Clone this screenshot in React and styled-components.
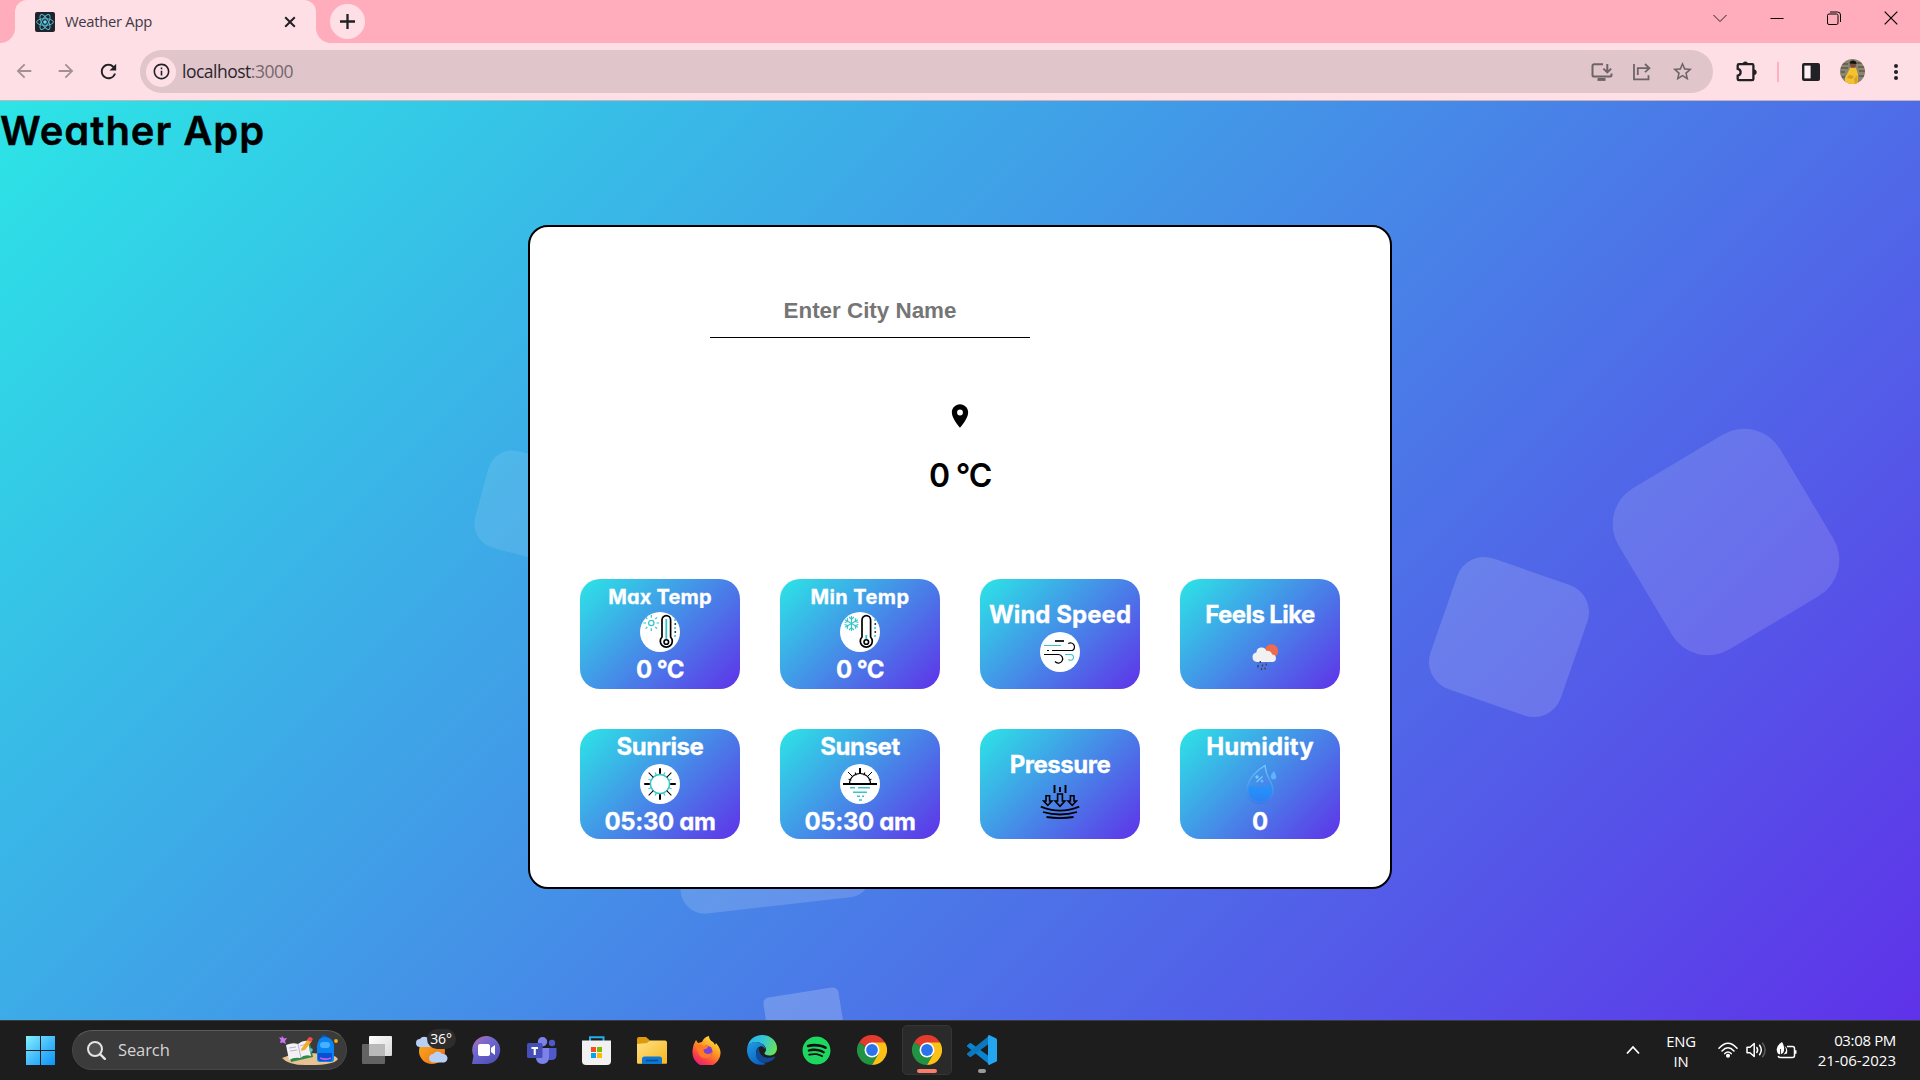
import React from "react";
import styled, { createGlobalStyle } from "styled-components";
import { MdLocationOn, MdStarBorder, MdArrowBack, MdArrowForward, MdRefresh, MdInfoOutline } from "react-icons/md";
import { FaSpotify } from "react-icons/fa";

const UI = `"Open Sans", "Noto Sans", sans-serif`;
const GEO = `Inter, "Open Sans", sans-serif`;
const BRAND = "linear-gradient(135deg, #2ce5e6 0%, #5f32e9 100%)";

const GlobalStyle = createGlobalStyle`
  * { box-sizing: border-box; }
  html, body { margin: 0; padding: 0; background: #1d1d1d; }
  svg { display: block; flex: none; }
`;

const Desktop = styled.div`
  width: 1920px;
  height: 1080px;
  display: flex;
  flex-direction: column;
  overflow: hidden;
  font-family: ${UI};
`;

/* ---------- browser chrome ---------- */

const TabStrip = styled.div`
  height: 43px;
  flex: none;
  display: flex;
  align-items: flex-start;
  background: #ffadbc;
`;

const TabFoot = styled.div`
  width: 15px;
  height: 43px;
  background: radial-gradient(circle at ${(p) => (p.$side === "left" ? "0 0" : "100% 0")}, transparent 14.5px, #ffdfe6 15.5px) no-repeat 0 28px / 15px 15px;
`;

const Tab = styled.div`
  width: 301px;
  height: 43px;
  display: flex;
  align-items: center;
  padding: 0 20px;
  background: #ffdfe6;
  border-radius: 12px 12px 0 0;
`;

const TabTitle = styled.span`
  flex: 1;
  margin-left: 10px;
  font-size: 14.8px;
  line-height: 20px;
  letter-spacing: -0.3px;
  color: #3c3a44;
  padding-bottom: 2px;
`;

const NewTab = styled.div`
  width: 35px;
  height: 35px;
  margin: 4px 0 0 -1px;
  border-radius: 50%;
  background: #ffdfe6;
  display: grid;
  place-items: center;
`;

const WindowControls = styled.div`
  margin-left: auto;
  display: flex;
  gap: 43px;
  padding: 11px 22px 0 0;
`;

const Toolbar = styled.div`
  height: 58px;
  flex: none;
  display: flex;
  align-items: center;
  background: #ffdfe6;
  border-bottom: 1px solid #c4b4ba;
  padding: 0 12px 0 13px;
`;

const NavButtons = styled.div`
  display: flex;
  width: 127px;
  gap: 20px;
  color: #202124;
`;

const AddressBar = styled.div`
  width: 1573px;
  height: 43px;
  border-radius: 22px;
  background: #e0c5ca;
  display: flex;
  align-items: center;
  padding: 0 19px 0 6px;
`;

const SiteInfo = styled.div`
  width: 30px;
  height: 30px;
  border-radius: 50%;
  background: #ffdfe6;
  display: grid;
  place-items: center;
  color: #202124;
`;

const Url = styled.span`
  flex: 1;
  margin-left: 6px;
  padding-bottom: 1px;
  font-size: 17.5px;
  line-height: 24px;
  letter-spacing: -0.5px;
  color: #2a262d;
  span { color: #75686e; }
`;

const AddressActions = styled.div`
  display: flex;
  align-items: center;
  gap: 20px;
  color: #6d6468;
`;

const ToolbarActions = styled.div`
  margin-left: 23px;
  display: flex;
  flex: 1;
  align-items: center;
  color: #202124;
`;

const Divider = styled.div`
  width: 2px;
  height: 20px;
  margin: 0 23px 0 20px;
  background: #ffb3c1;
`;

const Avatar = styled.div`
  margin: 0 23px 0 20px;
  width: 25px;
  height: 25px;
  border-radius: 50%;
  overflow: hidden;
`;

/* ---------- page ---------- */

const Page = styled.main`
  position: relative;
  height: 919px;
  flex: none;
  overflow: hidden;
  background: ${BRAND};
  font-family: ${GEO};
  font-feature-settings: "cv11";
`;

const Square = styled.div`
  position: absolute;
  left: ${(p) => p.$x - p.$size / 2}px;
  top: ${(p) => p.$y - p.$size / 2}px;
  width: ${(p) => p.$size}px;
  height: ${(p) => p.$size}px;
  border-radius: ${(p) => p.$radius}px;
  transform: rotate(${(p) => p.$turn}deg);
  background: rgba(255, 255, 255, ${(p) => p.$alpha});
`;

const PageTitle = styled.h1`
  position: relative;
  margin: 0;
  height: 124px;
  padding-top: 8px;
  font-size: 40px;
  line-height: 44px;
  font-weight: 600;
  letter-spacing: 0.95px;
  -webkit-text-stroke: 0.4px #000;
  color: #000;
`;

const Card = styled.section`
  position: relative;
  width: 864px;
  height: 664px;
  margin: 0 auto;
  padding: 57px 50px 0;
  background: #fff;
  border: 2px solid #000;
  border-radius: 20px;
  display: flex;
  flex-direction: column;
  align-items: center;
`;

const CityInput = styled.input`
  width: 320px;
  height: 54px;
  align-self: flex-start;
  margin-left: 130px;
  padding: 0;
  border: 0;
  border-bottom: 1px solid #000;
  outline: 0;
  background: transparent;
  text-align: center;
  font: bold 22.4px "Liberation Sans", Arial, sans-serif;
  &::placeholder { color: #757575; opacity: 1; }
`;

const Location = styled.div`
  height: 28px;
  margin-top: 64px;
`;

const Temperature = styled.div`
  margin-top: 22px;
  height: 127px;
  font-size: 32px;
  line-height: 48px;
  font-weight: 600;
  letter-spacing: -1.2px;
  color: #000;
`;

const Tiles = styled.div`
  display: grid;
  grid-template-columns: repeat(4, 160px);
  grid-auto-rows: 110px;
  gap: 40px;
`;

const Tile = styled.div`
  display: flex;
  flex-direction: column;
  align-items: center;
  justify-content: center;
  padding-top: ${(p) => (p.$small ? 2 : 0)}px;
  border-radius: 20px;
  background: ${BRAND};
  color: #fff;
`;

const TileText = styled.div`
  flex: none;
  font-size: ${(p) => (p.$small ? 20 : 24)}px;
  line-height: 1.5;
  font-weight: 700;
  white-space: nowrap;
  letter-spacing: ${(p) => p.$track || 0}px;
  -webkit-text-stroke: 0.3px #fff;
`;

const TileLabel = styled(TileText)`
  height: ${(p) => (p.$small ? 30 : 36)}px;
  line-height: ${(p) => (p.$small ? 30 : 38)}px;
`;

/* ---------- taskbar ---------- */

const Taskbar = styled.footer`
  height: 60px;
  flex: none;
  display: flex;
  align-items: center;
  background: #1d1d1d;
  border-top: 1px solid #3b3b3e;
  padding: 0 24px 1px 13px;
  color: #fff;
`;

const Slot = styled.div`
  width: 55px;
  height: 58px;
  display: grid;
  place-items: center;
`;

const ActiveApp = styled.div`
  width: 50px;
  height: 50px;
  border-radius: 5px;
  background: #2a2a2a;
  border: 1px solid #353535;
  display: grid;
  place-items: center;
`;

const Stack = styled.div`
  position: relative;
  display: grid;
  place-items: center;
`;

const Indicator = styled.span`
  position: absolute;
  top: 34px;
  width: ${(p) => p.$width}px;
  height: 4px;
  border-radius: 2px;
  background: ${(p) => p.$color};
`;

const SearchBox = styled.div`
  width: 275px;
  height: 40px;
  margin: 0 2px 0 4px;
  padding: 0 7px 0 14px;
  display: flex;
  align-items: center;
  border-radius: 20px;
  background: #3b3b3b;
  border: 1px solid #474747;
  border-top-color: #5c5c5c;
  span {
    flex: 1;
    margin-left: 12px;
    font-size: 16.5px;
    line-height: 22px;
    letter-spacing: -0.1px;
    color: #d4d4d4;
  }
`;

const WeatherBadge = styled.span`
  position: absolute;
  left: 11px;
  top: -7px;
  width: 29px;
  height: 20px;
  border-radius: 10px;
  background: #2d2d2d;
  font-size: 14px;
  line-height: 20px;
  text-align: center;
  letter-spacing: -0.2px;
`;

const Tray = styled.div`
  margin-left: auto;
  display: flex;
  align-items: center;
`;

const Language = styled.div`
  width: 36px;
  margin: 1px 19px 0 23px;
  text-align: center;
  font-size: 14.8px;
  line-height: 20px;
  letter-spacing: -0.2px;
`;

const Clock = styled.div`
  width: 99px;
  text-align: right;
  font-size: 15px;
  line-height: 20px;
  white-space: nowrap;
  letter-spacing: ${(p) => p.$track || 0}px;
`;

const ClockTime = styled.div`
  letter-spacing: -0.35px;
`;

const TrayIcons = styled.div`
  display: flex;
  align-items: center;
  gap: 8px;
`;

/* ---------- drawings ---------- */

const TEAL = "#33c5c9";

const ReactIcon = () => (
  <svg width="20" height="20" viewBox="0 0 20 20">
    <rect width="20" height="20" rx="2" fill="#20232a" />
    <g fill="none" stroke="#53b9d1" strokeWidth="1">
      {[0, 60, 120].map((a) => (
        <ellipse key={a} cx="10" cy="10" rx="8.4" ry="3.3" transform={`rotate(${a} 10 10)`} />
      ))}
    </g>
    <circle cx="10" cy="10" r="1.8" fill="#61dafb" />
  </svg>
);

const ShareIcon = () => (
  <svg width="18" height="18" viewBox="0 0 18 18" fill="none" stroke="currentColor" strokeWidth="1.8">
    <path d="M1 1v15.4h14.5v-4.2M4.8 12V5.2h10.5M12 1l4.4 4.2L12 9.2" />
  </svg>
);

const InstallIcon = () => (
  <svg width="22" height="18" viewBox="0 0 22 18" fill="none" stroke="currentColor" strokeWidth="2">
    <path d="M12 1.2H3.2Q1.5 1.2 1.5 2.7V12q0 1.6 1.7 1.6h15.6q1.7 0 1.7-1.6v-1.5M16.3 1v8M12.4 5.6l3.9 3.8 3.9-3.8" />
    <path d="M6.5 16.4h8" strokeWidth="3" />
  </svg>
);

const PuzzleIcon = () => (
  <svg width="21" height="21" viewBox="0 0 21 21">
    <path d="M1.7 4.4q0-1.2 1.2-1.2h13.3q1.2 0 1.2 1.2v13.6q0 1.2-1.2 1.2H2.9q-1.2 0-1.2-1.2v-3.3q2.9-.6 2.9-3.4t-2.9-3.4z" fill="none" stroke="currentColor" strokeWidth="2.3" />
    <path d="M6.7 3.2a2.6 2.6 0 0 1 5.2 0zM18 8.6a2.6 2.6 0 0 1 0 5.3z" fill="currentColor" />
  </svg>
);

const PanelIcon = () => (
  <svg width="18" height="18" viewBox="0 0 18 18">
    <rect width="18" height="18" rx="2" fill="#202124" />
    <path d="M2.4 2.6h6.2v12.800H2.400z" fill="#fff0f3" />
  </svg>
);

const AvatarArt = () => (
  <svg width="25" height="25" viewBox="0 0 25 25">
    <rect width="25" height="25" fill="#8a8470" />
    <path d="M2 5h6M1 9h7M1 13h4M17 4h7M18 8h6M19 12h6M19 17h5M2 18h3" stroke="#5f5b4c" strokeWidth="1.5" />
    <path d="M5 25l0-6 2-4 3-6 6 0 2 6 0 10z" fill="#f2c22f" />
    <path d="M9 16l5 1-2 3-5-1z" fill="#d99b22" />
    <circle cx="13" cy="5.5" r="3.1" fill="#7a4d38" />
    <path d="M9.500 4.500Q10 1 13.500 1.500T16.500 5z" fill="#17130f" />
    <path d="M14 20l1 5h3l-1-9z" fill="#d9a327" />
  </svg>
);

const Disc = ({ children }) => (
  <svg width="40" height="40" viewBox="0 0 40 40" fill="none">
    <circle cx="20" cy="20" r="20" fill="#fff" />
    {children}
  </svg>
);

const Thermometer = ({ level }) => (
  <>
    <path d="M22 25V8a4.300 4.300 0 0 1 8.600 0v17a6 6 0 1 1-8.600 0z" stroke="#000" strokeWidth="1.7" />
    <path d={`M26.300 ${level}V27`} stroke={TEAL} strokeWidth="1.8" />
    <circle cx="26.3" cy="30" r="2.3" stroke="#000" strokeWidth="1.6" />
    <path d="M34 8h2M34 16h2M34 24h2" stroke={TEAL} strokeWidth="1.7" />
    <path d="M34.500 12h1.600M34.500 20h1.600" stroke="#000" strokeWidth="1.6" />
  </>
);

const MaxTempIcon = () => (
  <Disc>
    <circle cx="11.3" cy="11" r="2.7" stroke={TEAL} strokeWidth="1.2" />
    <path d="M11.300 3v2.800M11.300 16.200V19M3.300 11h2.800M16.500 11h2.800M5.600 5.300l1.700 1.700M15.300 15l1.700 1.700M5.600 16.700L7.300 15M15.300 7L17 5.300" stroke={TEAL} strokeWidth="1.2" />
    <Thermometer level={7} />
  </Disc>
);

const MinTempIcon = () => (
  <Disc>
    {[0, 60, 120, 180, 240, 300].map((a) => (
      <path key={a} d="M11.500 11.500V4M9 5l2.500 2.400L14 5" stroke={TEAL} strokeWidth="1.1" transform={`rotate(${a} 11.5 11.5)`} />
    ))}
    <Thermometer level={23} />
  </Disc>
);

const WindIcon = () => (
  <Disc>
    <path d="M4 13.500h17M25 22.500h6a2.900 2.900 0 1 1-2.500 4.800" stroke={TEAL} strokeWidth="1.1" />
    <path d="M15 9h9" stroke="#000" strokeWidth="1.7" />
    <path d="M7 18.500h2M12 18.500h20.500a4 4 0 1 0-4.200-7M4 22.500h14.500a4.300 4.300 0 1 1-3.500 7" stroke="#000" strokeWidth="1.2" />
  </Disc>
);

const SunriseIcon = () => (
  <Disc>
    <circle cx="20" cy="20" r="9.6" stroke={TEAL} strokeWidth="1.5" />
    {[0, 90, 180, 270].map((a) => (
      <path key={a} d="M20 4.200v5.600" stroke="#000" strokeWidth="2" transform={`rotate(${a} 20 20)`} />
    ))}
    {[45, 135, 225, 315].map((a) => (
      <path key={a} d="M20 4v6.500" stroke="#000" strokeWidth="1" transform={`rotate(${a} 20 20)`} />
    ))}
    {[22.5, 67.5, 112.5, 157.5, 202.5, 247.5, 292.5, 337.5].map((a) => (
      <path key={a} d="M20 7.500v3" stroke={TEAL} strokeWidth="1" transform={`rotate(${a} 20 20)`} />
    ))}
  </Disc>
);

const SunsetIcon = () => (
  <Disc>
    <path d="M9.500 19.500a10.500 10 0 0 1 21 0" stroke="#000" strokeWidth="1.2" />
    {[-67, -23, 23, 67].map((a) => (
      <path key={a} d="M20 7.500v3" stroke="#000" strokeWidth="1" transform={`rotate(${a} 20 20)`} />
    ))}
    <path d="M20 4v6" stroke="#000" strokeWidth="2" />
    <path d="M8 8l4.500 4.500M32 8l-4.500 4.500" stroke="#000" strokeWidth="1" />
    <path d="M3 20h34" stroke="#000" strokeWidth="1.8" />
    <path d="M10 23.800h5M18 23.800h12M13 28.200h14M17 32.200h3M22 32.200h2M19 36h3" stroke={TEAL} strokeWidth="1.5" />
  </Disc>
);

const FeelsLikeIcon = () => (
  <svg width="40" height="40" viewBox="0 0 40 40">
    <circle cx="31.5" cy="19" r="6.7" fill="#ee6c4d" />
    <path d="M17 30a4.800 4.800 0 0 1-.6-9.500 5.200 5.200 0 0 1 10.100-1.500 4.200 4.200 0 0 1 5.500 3.500 3.800 3.800 0 0 1 1 7.500z" fill="#f1f1f1" />
    <path d="M20.300 29v2M18.300 33l-.6 2.500M22.700 32.500l-.5 2M21.800 36l-.5 2M26.500 31.500l-.5 2M25.300 35.500l-.5 2" stroke="#41454c" strokeWidth="1.4" />
  </svg>
);

const PressureIcon = () => (
  <svg width="40" height="40" viewBox="0 0 40 40" fill="none" stroke="#000" strokeWidth="1.6">
    <path d="M14.500 3v8M20 5v5M25.500 3v8" strokeWidth="1.9" />
    <path d="M17.600 12h4.800v7h2.500L20 24.300 15.100 19h2.500z" />
    <path d="M6 13.700h3.600v5.300h2.300l-4.100 4.300L3.700 19H6zM30.400 13.700H34V19h2.300l-4.100 4.300-4.100-4.300h2.300z" />
    <path d="M.8 24.700q19.200 8 38.400 0M3 30q17 5 34 0M6.500 35q13.500 2.200 27 0" strokeWidth="1.8" />
  </svg>
);

const HumidityIcon = () => (
  <svg width="40" height="40" viewBox="0 0 40 40" fill="none">
    <defs>
      <linearGradient id="drop" x1="0" y1="0" x2="0" y2="1">
        <stop offset="0" stopColor="#77c8ff" />
        <stop offset="0.6" stopColor="#3f9bf2" />
        <stop offset="1" stopColor="#3b78e8" />
      </linearGradient>
      <linearGradient id="water" x1="0" y1="0" x2="0" y2="1">
        <stop offset="0" stopColor="#2496fa" />
        <stop offset="1" stopColor="#2c80f4" />
      </linearGradient>
    </defs>
    <path d="M25 1.500C19 5 7 14 7 26.500a13 13 0 0 0 26 0C33 17 26 15 25 1.500z" stroke="url(#drop)" strokeWidth="1.3" />
    <path d="M9 22.500q3-2 5.500-.3 3 1.800 5.500-.2 3 2.800 6 .2 2.500-2.600 4.700.3 1 2 .8 4a11.400 11.400 0 0 1-22.800 0z" fill="url(#water)" />
    <path d="M16.500 18l6-5.500" stroke="#77c8ff" strokeWidth="1.3" />
    <circle cx="17" cy="13" r="1.7" fill="#77c8ff" />
    <circle cx="22" cy="17" r="1.5" fill="#5fb8ff" />
    <path d="M34 7q-4 4.200-3 7 3 3 5.200 0Q36.500 11.500 34 7z" fill="#5bb6fb" />
  </svg>
);

const WindowsLogo = () => (
  <svg width="29" height="29" viewBox="0 0 29 29">
    <defs>
      <linearGradient id="win" x1="0" y1="0" x2="1" y2="1">
        <stop offset="0" stopColor="#84f1fb" />
        <stop offset="0.5" stopColor="#45bdfb" />
        <stop offset="1" stopColor="#0b93f8" />
      </linearGradient>
    </defs>
    <path d="M0 0h14v14H0zM15 0h14v14H15zM0 15h14v14H0zM15 15h14v14H15z" fill="url(#win)" />
  </svg>
);

const SearchIcon = () => (
  <svg width="19" height="19" viewBox="0 0 19 19" fill="none" stroke="#e4e4e4" strokeLinecap="round">
    <circle cx="8" cy="8" r="7" strokeWidth="2" fill="#505050" />
    <path d="M13.300 13.300l4.500 4.500" strokeWidth="2.4" />
  </svg>
);

const StudyArt = () => (
  <svg width="60" height="32" viewBox="0 0 60 32">
    <path d="M3 24Q20 17 42 20q14 0 17 5-4 6-28 6Q10 32 3 24z" fill="#e9c291" />
    <path d="M8 13l4 15 22-5-3-14z" fill="#2f8a4c" />
    <path d="M7 11q7-3 12-1 5-4 10-3l3 15q-6-2-11 2-6-1-11 2z" fill="#f3f0f6" />
    <path d="M19 10l3 14M10 14l7-1M11 17l7-1M21 12l6-2M22 15l6-2" stroke="#b9b3c4" strokeWidth="1" />
    <path d="M23 14l6-9 4 2-7 9-4 1z" fill="#f7a928" />
    <path d="M28 6l2-3q3 0 4 2l-2 3z" fill="#ef4b50" />
    <rect x="42" y="1" width="6" height="5" rx="2.5" fill="#0b56b8" />
    <path d="M38 12Q39 3 46 3t9 8v14q0 3-3 3H41q-3 0-3-3z" fill="#0a84f2" />
    <rect x="41" y="8" width="10" height="6" rx="3" fill="#46b1ff" />
    <path d="M39 19h14v5q0 3-3 3h-8q-3 0-3-3z" fill="#0a4fd0" />
    <path d="M41 24q5 2.500 11 0" stroke="#c45bea" strokeWidth="1.8" fill="none" />
    <path d="M3 2l2 2.500 3-.5-2 3 1 3-3-1.600L1 9l.8-3L0 3.500l2.500.3z" fill="#cf73f3" />
    <circle cx="32" cy="16" r="1.8" fill="#58c4cf" />
    <circle cx="57" cy="7" r="1.9" fill="#fbb113" />
  </svg>
);

const TaskView = () => (
  <svg width="30" height="28" viewBox="0 0 30 28">
    <defs>
      <linearGradient id="tv" x1="0" y1="0" x2="1" y2="1">
        <stop offset="0" stopColor="#fff" />
        <stop offset="1" stopColor="#d8d8d8" />
      </linearGradient>
    </defs>
    <rect y="8" width="23" height="20" rx="1" fill="#636363" />
    <rect x="7" width="23" height="20" rx="1" fill="url(#tv)" />
    <path d="M7 8h16v12H7z" fill="#b9b9b9" />
  </svg>
);

const Cloud = ({ x, y, s = 1 }) => (
  <path transform={`translate(${x} ${y}) scale(${s})`} d="M4 10a4 4 0 0 1 0-8 5 5 0 0 1 8.500 0 4 4 0 0 1 2 8z" fill="#b9d0f5" />
);

const WeatherIcon = () => (
  <svg width="32" height="29" viewBox="0 0 32 29">
    <defs>
      <linearGradient id="sunny" x1="0" y1="0" x2="1" y2="1">
        <stop offset="0" stopColor="#f9b020" />
        <stop offset="1" stopColor="#ef6c13" />
      </linearGradient>
    </defs>
    <circle cx="16" cy="15" r="13" fill="url(#sunny)" />
    <Cloud x={0} y={1} />
    <Cloud x={13} y={16} s={1.05} />
  </svg>
);

const ChatIcon = () => (
  <svg width="29" height="28" viewBox="0 0 29 28">
    <defs>
      <linearGradient id="chat" x1="0" y1="0" x2="0.7" y2="1">
        <stop offset="0" stopColor="#b96fae" />
        <stop offset="0.45" stopColor="#6e67cf" />
        <stop offset="1" stopColor="#5050b8" />
      </linearGradient>
    </defs>
    <path d="M0 28l1.500-8A14 14 0 1 1 15 28z" fill="url(#chat)" />
    <rect x="6" y="8" width="12" height="12" rx="2" fill="#fff" />
    <path d="M19 12l4-3v10l-4-3z" fill="#fff" />
  </svg>
);

const TeamsIcon = () => (
  <svg width="30" height="27" viewBox="0 0 30 27">
    <circle cx="25" cy="6" r="3.2" fill="#5059c9" />
    <path d="M21 11h8.500v7q0 5-5 5H21z" fill="#5059c9" />
    <circle cx="15.5" cy="4.7" r="4.7" fill="#7b83eb" />
    <path d="M9 11h13v9q0 7-6.500 7T9 20z" fill="#7b83eb" />
    <rect y="6" width="15.5" height="15" rx="1.5" fill="#464eb8" />
    <path d="M4.500 10h6.500v2H8.800v6H6.700v-6H4.500z" fill="#fff" />
  </svg>
);

const StoreIcon = () => (
  <svg width="29" height="29" viewBox="0 0 29 29">
    <path d="M8 6V1.200h13.500V6" fill="none" stroke="#1fb0f0" strokeWidth="2" />
    <path d="M0 4.500h29V25q0 4-4 4H4q-4 0-4-4z" fill="#f1f1f1" />
    <path d="M9 11h5v5H9z" fill="#f25022" />
    <path d="M15 11h5v5h-5z" fill="#7fba00" />
    <path d="M9 17h5v5H9z" fill="#00a4ef" />
    <path d="M15 17h5v5h-5z" fill="#ffb900" />
  </svg>
);

const FolderIcon = () => (
  <svg width="30" height="27" viewBox="0 0 30 27">
    <defs>
      <linearGradient id="folder" x1="0" y1="0" x2="1" y2="1">
        <stop offset="0" stopColor="#ffe083" />
        <stop offset="1" stopColor="#f7b71f" />
      </linearGradient>
    </defs>
    <path d="M0 2q0-2 2-2h7l4 3.500L10 8H0z" fill="#dd9a0c" />
    <path d="M0 7l10-1 3-2.500h15q2 0 2 2V26q0 .8-1 .8H1q-1 0-1-1z" fill="url(#folder)" />
    <path d="M5 27v-5q0-2.500 2.500-2.500h15Q25 19.500 25 22v5z" fill="#0e78d0" />
    <path d="M9 23.500h12" stroke="#0a4a94" strokeWidth="1.5" />
  </svg>
);

const FirefoxIcon = () => (
  <svg width="29" height="29" viewBox="0 0 29 29">
    <defs>
      <linearGradient id="fox" x1="0.8" y1="0" x2="0.2" y2="1">
        <stop offset="0" stopColor="#fff04a" />
        <stop offset="0.4" stopColor="#ff9a1f" />
        <stop offset="0.75" stopColor="#fb3f48" />
        <stop offset="1" stopColor="#e31587" />
      </linearGradient>
    </defs>
    <path d="M4 4l2 3 4-1q2-5 7-6 0 4 4 6 1 1 2 3l1-2q5 6 4.500 10A14 14 0 0 1 .5 16Q0 10 4 4z" fill="url(#fox)" />
    <circle cx="14.5" cy="15.5" r="6" fill="#7a43d6" />
    <path d="M3.500 9q5-2 8 1h5q-1 3-5 3.500 0 4 4 4.500 3 .3 4.500-2 0 5-5 6-7 1-8.500-5z" fill="#ff7a26" />
  </svg>
);

const EdgeIcon = () => (
  <svg width="30" height="30" viewBox="0 0 30 30">
    <defs>
      <linearGradient id="edgeTop" x1="0" y1="0.3" x2="1" y2="0.6">
        <stop offset="0" stopColor="#28b5ee" />
        <stop offset="0.5" stopColor="#35c6d6" />
        <stop offset="1" stopColor="#6be353" />
      </linearGradient>
      <linearGradient id="edgeLow" x1="0" y1="0" x2="0.6" y2="1">
        <stop offset="0" stopColor="#1f9de4" />
        <stop offset="1" stopColor="#0b62c4" />
      </linearGradient>
    </defs>
    <path d="M0.300 13.500C1 5 7.500 0 15 0c9 0 15 6.500 15 13 0 5-3.500 7.500-7.500 7.500-3.500 0-5.500-1.500-5-2.600 1-1.300 1.500-2 1.500-3.500C19 10 13 7 8.500 7S1 10 .3 13.500z" fill="url(#edgeTop)" />
    <path d="M0 15C0 9.500 4 7 8.500 7c5 0 10.300 3.500 9.500 7-1-2-3-3-5-2.500-3.500 1-5 5.500-3 10 1.500 4 5.500 6.500 9 7.500C8 32.500 0 24.500 0 15z" fill="url(#edgeLow)" />
    <path d="M12 12.500c-4 4-4 9.500-.5 13 3 3 8.500 3 13 .3 2-1.300 3.500-3 3.500-3.800 0-.5-.6-.6-1.200-.3-5.500 2.500-14 .8-14.800-6.700z" fill="#104a94" />
  </svg>
);

const SpotifyMark = styled.div`
  width: 29px;
  height: 29px;
  border-radius: 50%;
  background: #101010;
  color: #1ed760;
`;

const ChromeIcon = () => (
  <svg width="30" height="30" viewBox="0 0 30 30">
    <path d="M15 15L2 7.500A15 15 0 0 1 28 7.500z" fill="#e33b2e" />
    <path d="M15 15l6.500 3.700L15 30A15 15 0 0 1 2 7.500z" fill="#229342" />
    <path d="M15 7.500h13A15 15 0 0 1 15 30l6.500-11.300z" fill="#fbc116" />
    <circle cx="15" cy="15" r="7.5" fill="#fff" />
    <circle cx="15" cy="15" r="5.9" fill="#2a73ea" />
  </svg>
);

const CodeIcon = () => (
  <svg width="30" height="30" viewBox="0 0 30 30">
    <path d="M0 10.500l2.500-2.300q.8-.6 1.600 0L23 22v8L.3 11.800q-.8-.7-.3-1.300z" fill="#0a84cf" />
    <path d="M0 19.500l2.500 2.300q.8.6 1.600 0L23 8V0L.3 18.200q-.8.700-.3 1.300z" fill="#0d78bd" />
    <path d="M22 30q-1-.4-1-1.500V1.500Q21 .4 22 0l7 3.200q1 .5 1 1.500v20.600q0 1-1 1.500z" fill="#23a6ef" />
  </svg>
);

const WifiIcon = () => (
  <svg width="20" height="16" viewBox="0 0 20 16" fill="none" stroke="#fff" strokeWidth="1.5" strokeLinecap="round">
    <path d="M1 6.200Q10-3.800 19 6.200M4 9q6-6.500 12 0M6.800 11.600q3.200-3.300 6.400 0" />
    <circle cx="10" cy="13.7" r="1.3" fill="#fff" />
  </svg>
);

const SpeakerIcon = () => (
  <svg width="22" height="18" viewBox="0 0 22 18" fill="none" stroke="#fff" strokeWidth="1.5" strokeLinecap="round" strokeLinejoin="round">
    <path d="M1 6.200h3l4.200-3.700v13L4 11.800H1zM10.800 6.500q1.700 2.500 0 5M13.600 4.300q3.400 4.700 0 9.400" />
    <path d="M16.600 2.200q5 6.800 0 13.600" stroke="#5c5c5c" />
  </svg>
);

const BatteryIcon = () => (
  <svg width="21" height="17" viewBox="0 0 21 17" fill="none">
    <path d="M11 4.500h5.500q2 0 2 2v7q0 2-2 2h-12q-2 0-2.300-1.500" stroke="#fff" strokeWidth="1.5" />
    <path d="M19 8.200h1.500v3.600H19z" fill="#fff" />
    <path d="M6 0q-5 3-5.300 7Q.6 12 4 12.500 9 11.500 8 5 7.500 2 6 0zM8.500 4q3.500 5-1 8.500l3.500-1Q12 6 8.500 4z" fill="#fff" />
    <path d="M4.500 7v7" stroke="#1d1d1d" strokeWidth="0.8" />
  </svg>
);

const TILES = [
  { label: "Max Temp", small: true, track: 0.2, icon: MaxTempIcon, value: "0 °C", valueTrack: -0.5 },
  { label: "Min Temp", small: true, track: 0.4, icon: MinTempIcon, value: "0 °C", valueTrack: -0.5 },
  { label: "Wind Speed", track: 0.05, icon: WindIcon },
  { label: "Feels Like", track: -0.6, icon: FeelsLikeIcon },
  { label: "Sunrise", track: -0.4, icon: SunriseIcon, value: "05:30 am", valueTrack: -0.35 },
  { label: "Sunset", track: -0.4, icon: SunsetIcon, value: "05:30 am", valueTrack: -0.35 },
  { label: "Pressure", track: -0.45, icon: PressureIcon },
  { label: "Humidity", track: 0.1, icon: HumidityIcon, value: "0" },
];

const SQUARES = [
  { x: 1726.3, y: 441, size: 188, radius: 42, turn: -30.8, alpha: 0.13 },
  { x: 1509.2, y: 535.8, size: 138, radius: 28.6, turn: 19.2, alpha: 0.15 },
  { x: 530.4, y: 405.3, size: 100, radius: 25, turn: 15, alpha: 0.1 },
  { x: 767.5, y: 708.5, size: 192, radius: 24, turn: -6.5, alpha: 0.15 },
  { x: 806, y: 929, size: 76, radius: 6, turn: -9, alpha: 0.2 },
];

export default function App() {
  return (
    <Desktop>
      <GlobalStyle />
      <TabStrip>
        <TabFoot $side="left" />
        <Tab>
          <ReactIcon />
          <TabTitle>Weather App</TabTitle>
          <svg width="12" height="12" viewBox="0 0 12 12" stroke="#202124" strokeWidth="2">
            <path d="M1.200 1.200l9.600 9.600M10.800 1.200l-9.600 9.600" />
          </svg>
        </Tab>
        <TabFoot $side="right" />
        <NewTab>
          <svg width="15" height="15" viewBox="0 0 15 15" stroke="#202124" strokeWidth="2.3">
            <path d="M7.500 0v15M0 7.500h15" />
          </svg>
        </NewTab>
        <WindowControls>
          <svg width="14" height="14" viewBox="0 0 14 14" fill="none" stroke="#222">
            <path d="M.5 4l6.500 6.500L13.500 4" />
          </svg>
          <svg width="14" height="14" viewBox="0 0 14 14" fill="none" stroke="#000">
            <path d="M.5 7.500h13" />
          </svg>
          <svg width="14" height="14" viewBox="0 0 14 14" fill="none" stroke="#000">
            <rect x=".5" y="3" width="10.5" height="10.5" rx="1.5" />
            <path d="M3 1h7.500q3 0 3 3v7" />
          </svg>
          <svg width="14" height="14" viewBox="0 0 14 14" fill="none" stroke="#000" strokeWidth="1.2">
            <path d="M.7.700l12.600 12.600M13.300.700L.7 13.300" />
          </svg>
        </WindowControls>
      </TabStrip>

      <Toolbar>
        <NavButtons>
          <MdArrowBack size={22} color="#a39095" />
          <MdArrowForward size={22} color="#a39095" />
          <MdRefresh size={23} />
        </NavButtons>
        <AddressBar>
          <SiteInfo><MdInfoOutline size={19} /></SiteInfo>
          <Url>localhost<span>:3000</span></Url>
          <AddressActions>
            <InstallIcon />
            <ShareIcon />
            <MdStarBorder size={23} />
          </AddressActions>
        </AddressBar>
        <ToolbarActions>
          <PuzzleIcon />
          <Divider />
          <PanelIcon />
          <Avatar><AvatarArt /></Avatar>
          <svg width="16" height="16" viewBox="0 0 16 16" fill="#202124">
            <circle cx="8" cy="2" r="2" />
            <circle cx="8" cy="8" r="2" />
            <circle cx="8" cy="14" r="2" />
          </svg>
        </ToolbarActions>
      </Toolbar>

      <Page>
        {SQUARES.map((s, i) => (
          <Square key={i} $x={s.x} $y={s.y} $size={s.size} $radius={s.radius} $turn={s.turn} $alpha={s.alpha} />
        ))}
        <PageTitle>Weather App</PageTitle>
        <Card>
          <CityInput placeholder="Enter City Name" />
          <Location><MdLocationOn size={28} /></Location>
          <Temperature>0 °C</Temperature>
          <Tiles>
            {TILES.map(({ label, small, track, icon: Icon, value, valueTrack }) => (
              <Tile key={label} $small={small}>
                <TileLabel $small={small} $track={track}>{label}</TileLabel>
                <Icon />
                {value && <TileText $track={valueTrack}>{value}</TileText>}
              </Tile>
            ))}
          </Tiles>
        </Card>
      </Page>

      <Taskbar>
        <Slot><WindowsLogo /></Slot>
        <SearchBox>
          <SearchIcon />
          <span>Search</span>
          <StudyArt />
        </SearchBox>
        <Slot><TaskView /></Slot>
        <Slot>
          <Stack>
            <WeatherIcon />
            <WeatherBadge>36°</WeatherBadge>
          </Stack>
        </Slot>
        <Slot><ChatIcon /></Slot>
        <Slot><TeamsIcon /></Slot>
        <Slot><StoreIcon /></Slot>
        <Slot><FolderIcon /></Slot>
        <Slot><FirefoxIcon /></Slot>
        <Slot><EdgeIcon /></Slot>
        <Slot><SpotifyMark><FaSpotify size={29} /></SpotifyMark></Slot>
        <Slot><ChromeIcon /></Slot>
        <Slot>
          <ActiveApp>
            <Stack>
              <ChromeIcon />
              <Indicator $width={20} $color="#f4806a" />
            </Stack>
          </ActiveApp>
        </Slot>
        <Slot>
          <Stack>
            <CodeIcon />
            <Indicator $width={8} $color="#9a9a9a" />
          </Stack>
        </Slot>
        <Tray>
          <svg width="14" height="10" viewBox="0 0 14 10" fill="none" stroke="#fff" strokeWidth="1.8">
            <path d="M1 8.500l6-6.500 6 6.500" />
          </svg>
          <Language>ENG<br />IN</Language>
          <TrayIcons>
            <WifiIcon />
            <SpeakerIcon />
            <BatteryIcon />
          </TrayIcons>
          <Clock>
            <ClockTime>03:08 PM</ClockTime>
            <div>21-06-2023</div>
          </Clock>
        </Tray>
      </Taskbar>
    </Desktop>
  );
}
